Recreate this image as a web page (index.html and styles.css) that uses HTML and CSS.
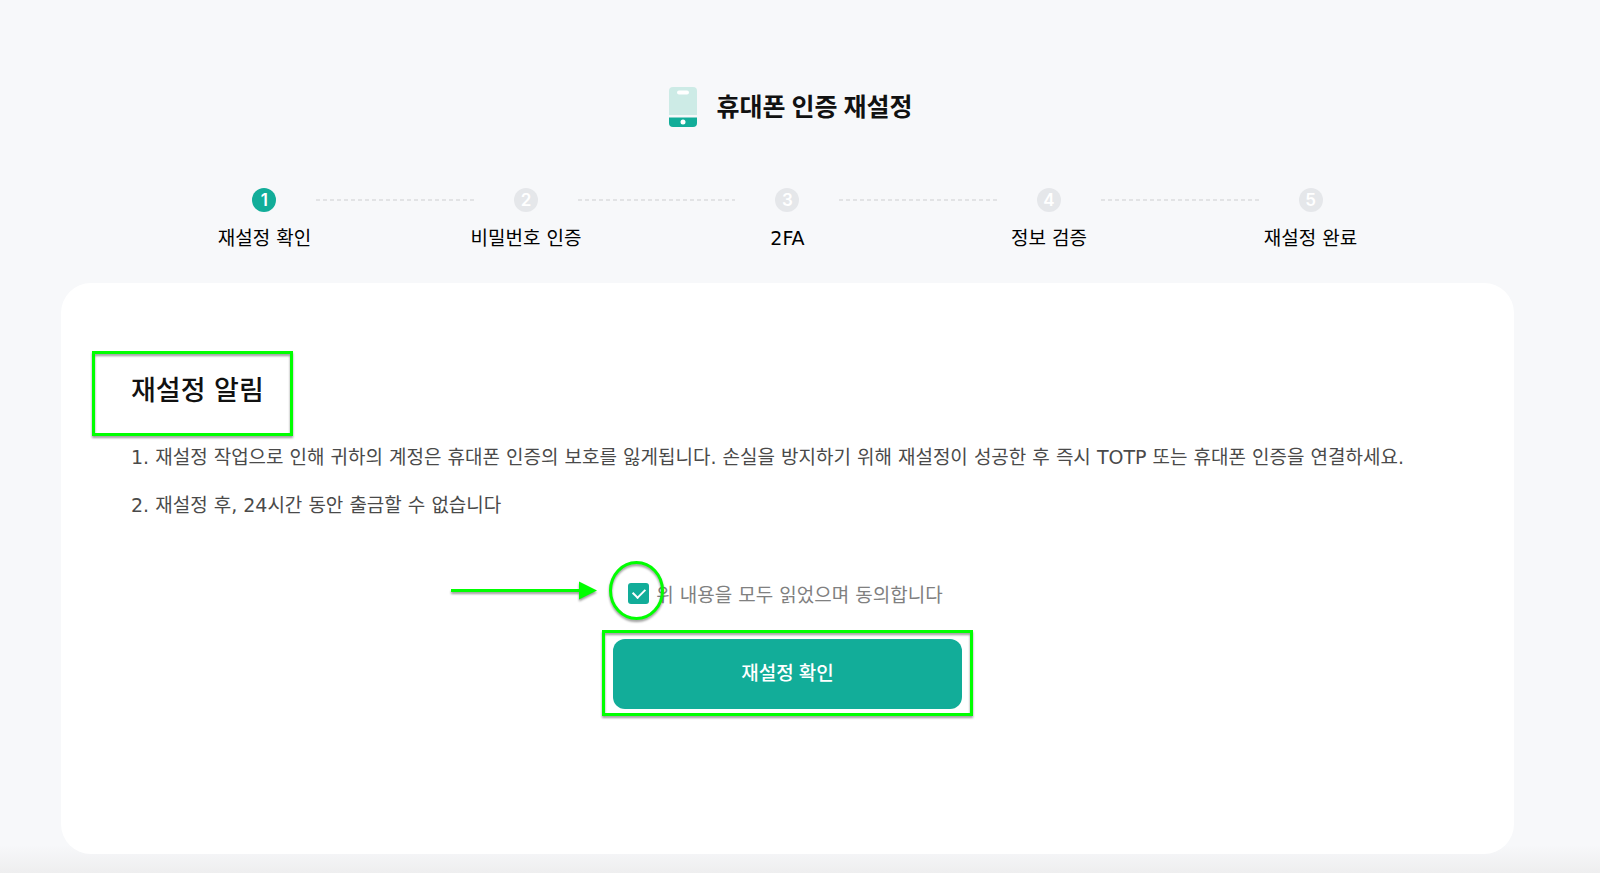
FILE: index.html
```
<!DOCTYPE html>
<html lang="ko">
<head>
    <meta charset="UTF-8">
    <meta name="viewport" content="width=device-width, initial-scale=1.0">
    <title>휴대폰 인증 재설정</title>
    <link rel="stylesheet" href="styles.css">
</head>
<body>
    <main class="page">
        <header class="page-title">
            <svg class="phone-icon" viewBox="0 0 28 40" width="28" height="40" aria-hidden="true">
                <path d="M4 0h20a4 4 0 0 1 4 4v24H0V4a4 4 0 0 1 4-4z" fill="#cdebe6"/>
                <rect x="8" y="3.5" width="12" height="4" rx="2" fill="#fff"/>
                <path d="M0 30.5h28V36a4 4 0 0 1-4 4H4a4 4 0 0 1-4-4z" fill="#12ad99"/>
                <circle cx="14" cy="35" r="2.5" fill="#fff"/>
            </svg>
            <h1>휴대폰 인증 재설정</h1>
        </header>

        <ol class="steps">
            <li class="step active"><span class="step-num">1</span><span class="step-label">재설정 확인</span></li>
            <li class="step"><span class="step-num">2</span><span class="step-label">비밀번호 인증</span></li>
            <li class="step"><span class="step-num">3</span><span class="step-label">2FA</span></li>
            <li class="step"><span class="step-num">4</span><span class="step-label">정보 검증</span></li>
            <li class="step"><span class="step-num">5</span><span class="step-label">재설정 완료</span></li>
        </ol>

        <form class="card">
            <h2 class="marked">재설정 알림</h2>
            <p class="notice">1. 재설정 작업으로 인해 귀하의 계정은 휴대폰 인증의 보호를 잃게됩니다. 손실을 방지하기 위해 재설정이 성공한 후 즉시 TOTP 또는 휴대폰 인증을 연결하세요.</p>
            <p class="notice">2. 재설정 후, 24시간 동안 출금할 수 없습니다</p>

            <div class="agree">
                <input type="checkbox" id="agree" name="agree" checked>
                <label for="agree">위 내용을 모두 읽었으며 동의합니다</label>
                <svg class="pointer" viewBox="0 0 220 70" width="220" height="70" aria-hidden="true">
                    <path d="M4 34.5H134" stroke="#0f0" stroke-width="3"/>
                    <path d="M132 25.5l18 9-18 9z" fill="#0f0"/>
                    <ellipse cx="189.5" cy="34.5" rx="26" ry="28" fill="none" stroke="#0f0" stroke-width="3"/>
                </svg>
            </div>
            <div class="submit marked">
                <button type="submit">재설정 확인</button>
            </div>
        </form>
    </main>
</body>
</html>
```

FILE: styles.css
```
* { box-sizing: border-box; }
body { margin: 0; min-height: 100vh; font-family: "DejaVu Sans", "Noto Sans CJK KR", sans-serif; font-size: 19px; color: #111; background: linear-gradient(to top, #eeeeef, #f7f8fa 28px); }
h1, h2, p, ol { margin: 0; padding: 0; }
.page { padding: 87px 86px 19px 61px; }

.page-title { display: flex; justify-content: center; align-items: center; gap: 20px; height: 40px; padding-left: 6px; }
.page-title h1 { font-family: Inter, "Noto Sans CJK KR", sans-serif; font-size: 25px; line-height: 40px; font-weight: bold; }

/* steps */
.steps { display: grid; grid-template-columns: repeat(5, 1fr); width: 90%; margin: 61px auto 0; list-style: none; }
.step { position: relative; display: flex; flex-direction: column; align-items: center; gap: 12px; }
.step-num { width: 24px; height: 24px; border-radius: 50%; background-color: #e5e7ea; color: white; font-family: Inter, sans-serif; font-size: 17px; line-height: 24px; font-weight: 600; text-align: center; }
.step.active .step-num { background-color: #12ad99; }
.step-label { line-height: 28px; color: #000; }
.step:not(:last-child)::after { content: ""; position: absolute; top: 11px; left: calc(50% + 52px); width: calc(100% - 104px); height: 2px; background: repeating-linear-gradient(to right, #e2e3e5 0 4px, transparent 4px 7px); }

/* card */
.card { margin-top: 31px; padding: 88px 70px 144px; min-height: 571px; border-radius: 30px; background-color: white; }
.card h2 { width: fit-content; font-size: 27px; line-height: 40px; font-weight: 500; }
.notice { line-height: 28px; margin-top: 20px; color: #4a4a4a; }
h2 + .notice { margin-top: 32px; }

.agree { position: relative; display: flex; justify-content: center; align-items: center; gap: 7px; width: fit-content; height: 28px; margin: 60px auto 0; padding-right: 4px; color: #808080; }
.agree input { appearance: none; display: grid; place-items: center; width: 21px; height: 21px; margin: 0; border-radius: 3px; background-color: #12ad99; }
.agree input:checked::after { content: ""; width: 6px; height: 10px; margin-bottom: 3px; border: solid white; border-width: 0 2px 2px 0; transform: rotate(45deg); }

.submit { width: 349px; margin: 32px auto 0; }
.submit button { display: block; width: 100%; height: 70px; padding: 0 0 6px; border: none; border-radius: 12px; background-color: #12ad99; color: white; font-family: Inter, "Noto Sans CJK KR", sans-serif; font-size: 19px; font-weight: 500; cursor: pointer; }

/* green marks */
.marked { position: relative; }
.marked::after { content: ""; position: absolute; inset: -9px -11px -7px; border: 3px solid #0f0; filter: drop-shadow(0 2px 1px rgba(0,0,0,0.4)); pointer-events: none; }
h2.marked::after { inset: -20px -29px -25px -39px; }
.pointer { position: absolute; top: -23px; left: -181px; filter: drop-shadow(0 2px 1px rgba(0,0,0,0.4)); pointer-events: none; }
```
